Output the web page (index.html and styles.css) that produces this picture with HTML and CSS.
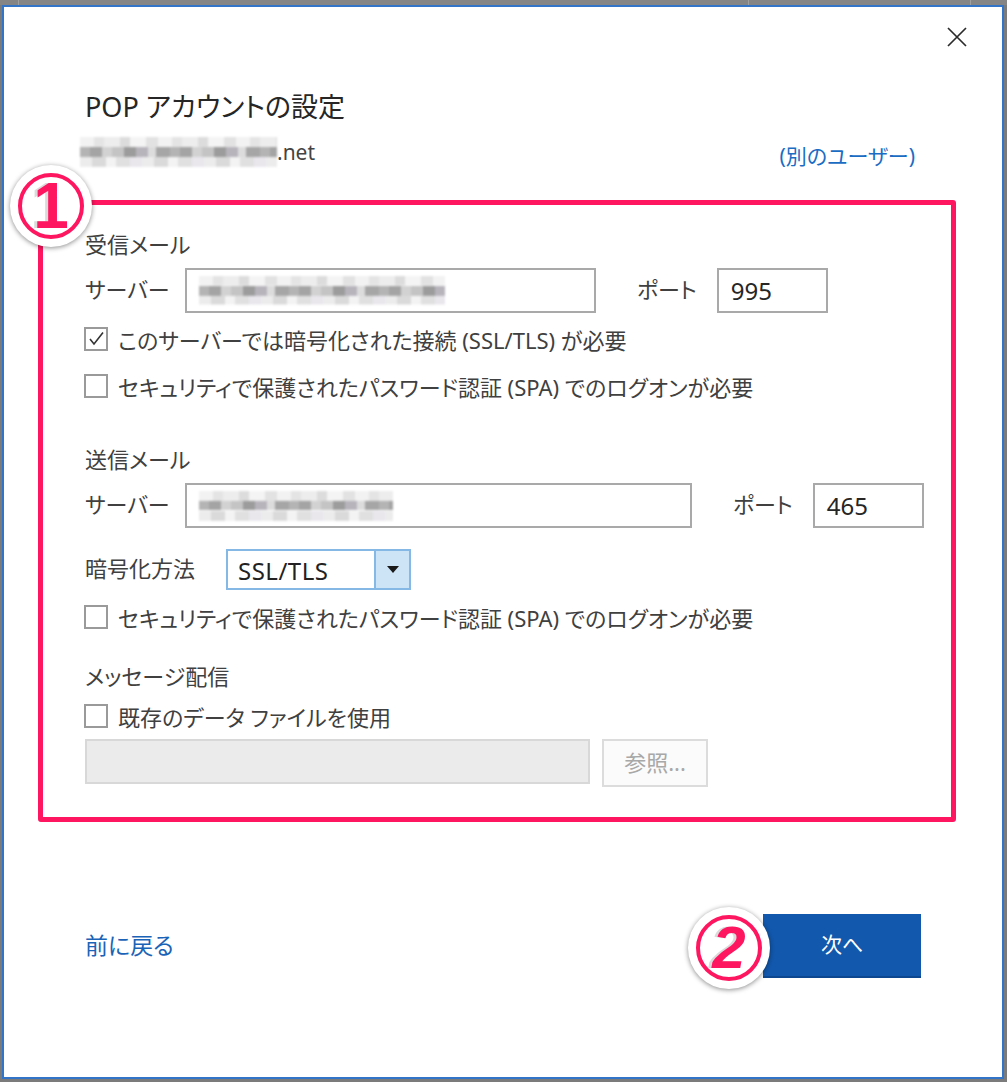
FILE: index.html
```html
<!DOCTYPE html>
<html lang="ja">
<head>
  <meta charset="UTF-8" />
  <meta name="viewport" content="width=device-width, initial-scale=1.0" />
  <title>POP アカウントの設定</title>
  <link rel="stylesheet" href="styles.css">
</head>
<body>

  <!-- 上のバー -->
  <div class="topbar"></div>

  <!-- ダイアログ -->
  <div class="window">

    <div class="titlebar">
      <button class="close" aria-label="閉じる">
        <svg width="22" height="22" viewBox="0 0 22 22">
          <path d="M2 2 L20 20 M20 2 L2 20" stroke="#2b2b2b" stroke-width="1.7" fill="none" />
        </svg>
      </button>
    </div>

    <div class="head">
      <h1>POP アカウントの設定</h1>
      <div class="account">
        <span class="email"><span class="blur blur-mail"></span>.net</span>
        <a class="link other-user" href="#">(別のユーザー)</a>
      </div>
    </div>

    <div class="form">
      <div class="group">受信メール</div>
      <div class="row server">
        <span class="label">サーバー</span>
        <span class="field host host-in"><span class="blur blur-in"></span></span>
        <span class="label port-label">ポート</span>
        <span class="field port">995</span>
      </div>
      <div class="check first">
        <span class="box">
          <svg width="20" height="20" viewBox="0 0 20 20">
            <path d="M4 10 L8 15 L17 3.5" stroke="#333" stroke-width="1.6" fill="none" />
          </svg>
        </span>
        このサーバーでは暗号化された接続 (SSL/TLS) が必要
      </div>
      <div class="check second">
        <span class="box"></span>
        セキュリティで保護されたパスワード認証 (SPA) でのログオンが必要
      </div>

      <div class="group outgoing">送信メール</div>
      <div class="row server">
        <span class="label">サーバー</span>
        <span class="field host host-out"><span class="blur blur-out"></span></span>
        <span class="label port-label">ポート</span>
        <span class="field port">465</span>
      </div>
      <div class="row crypt">
        <span class="label crypt-label">暗号化方法</span>
        <span class="select">
          <span class="select-value">SSL/TLS</span>
          <span class="select-arrow"></span>
        </span>
      </div>
      <div class="check third">
        <span class="box"></span>
        セキュリティで保護されたパスワード認証 (SPA) でのログオンが必要
      </div>

      <div class="group delivery">メッセージ配信</div>
      <div class="check fourth">
        <span class="box"></span>
        既存のデータ ファイルを使用
      </div>
      <div class="row data">
        <span class="field disabled"></span>
        <span class="browse">参照...</span>
      </div>
    </div>

    <div class="footer">
      <a class="link back" href="#">前に戻る</a>
      <button class="next">次へ</button>
    </div>

    <!-- 注釈 -->
    <div class="mark-frame"></div>
    <div class="badge badge-1"><span class="ring">1</span></div>
    <div class="badge badge-2"><span class="ring">2</span></div>
  </div>

</body>
</html>
```

FILE: styles.css
```css
body {
  margin: 0;
  height: 1082px;
  background: #7b7b7b;
  font-family: "Noto Sans", "Noto Sans CJK JP", sans-serif;
  font-feature-settings: "palt";
  color: #404040;
  overflow: hidden;
}

/* 上のバー */
.topbar {
  height: 5px;
  background:
    linear-gradient(90deg, transparent 18px, #a0a0a0 18px, #a0a0a0 19px, transparent 19px,
      transparent 748px, #a0a0a0 748px, #a0a0a0 749px, transparent 749px,
      transparent 970px, #a0a0a0 970px, #a0a0a0 971px, transparent 971px),
    #858585;
}

/* ダイアログ */
.window {
  position: relative;
  box-sizing: border-box;
  width: 1002px;
  height: 1074px;
  margin-left: 2px;
  background: #fff;
  border: 2px solid #3274c8;
  display: flex;
  flex-direction: column;
}

.titlebar {
  display: flex;
  justify-content: flex-end;
  padding: 19px 34px 0 0;
}

.close {
  width: 22px;
  height: 22px;
  padding: 0;
  border: 0;
  background: transparent;
  display: block;
}

.close svg {
  display: block;
}

.head {
  padding: 0 87px 0 81px;
}

h1 {
  margin: 41px 0 0;
  font-size: 27px;
  line-height: 36px;
  font-weight: 400;
  color: #262626;
}

.account {
  margin-top: 12px;
  height: 30px;
  display: flex;
  justify-content: space-between;
  align-items: center;
}

.email {
  display: flex;
  align-items: center;
  margin-left: -5px;
  font-size: 21px;
  color: #444;
}

.link {
  color: #1b6cc3;
  text-decoration: none;
  font-size: 21px;
}

.other-user {
  padding-top: 6px;
}

/* ぼかし */
.blur {
  display: block;
  filter: blur(1.2px);
  background:
    repeating-linear-gradient(90deg, #f2f2f2 0 14px, #e4e4e4 14px 24px, #ededed 24px 40px, #dcdcdc 40px 50px, #f4f4f4 50px 66px, #e2e2e2 66px 78px) top / 100% 33% no-repeat,
    repeating-linear-gradient(90deg, #b4b4b4 0 10px, #a4a4a4 10px 22px, #d2d2d2 22px 32px, #c4c4c4 32px 44px, #9c9c9c 44px 56px, #b8b4bc 56px 68px, #dcdcdc 68px 76px, #a6a6a6 76px 90px) center / 100% 34% no-repeat,
    repeating-linear-gradient(90deg, #ececec 0 12px, #dadada 12px 26px, #f3f3f3 26px 36px, #e0e0e0 36px 50px, #e9e6ec 50px 62px) bottom / 100% 33% no-repeat;
}

.blur-mail {
  width: 197px;
  height: 30px;
}

.blur-in {
  width: 246px;
  height: 29px;
}

.blur-out {
  width: 194px;
  height: 30px;
}

/* フォーム */
.form {
  padding-left: 81px;
  font-size: 22px;
}

.group {
  margin-top: 62px;
  line-height: 30px;
}

.group.outgoing {
  margin-top: 42px;
}

.group.delivery {
  margin-top: 28px;
}

.row {
  display: flex;
  align-items: center;
}

.server {
  margin-top: 9px;
}

.label {
  width: 100px;
  flex: none;
  padding-bottom: 6px;
}

.field {
  box-sizing: border-box;
  height: 45px;
  border: 2px solid #a9a9a9;
  background: #fff;
  display: flex;
  align-items: center;
}

.host {
  padding-left: 12px;
}

.host-in {
  width: 411px;
}

.host-out {
  width: 507px;
}

.port-label {
  width: auto;
  margin: 0 20px 0 41px;
}

.port {
  width: 111px;
  padding-left: 12px;
  color: #262626;
  font-size: 24px;
}

.crypt {
  margin-top: 21px;
}

.crypt-label {
  width: 141px;
}

.select {
  box-sizing: border-box;
  width: 185px;
  height: 41px;
  border: 2px solid #86b8e6;
  display: flex;
}

.select-value {
  flex: 1;
  padding-left: 10px;
  line-height: 39px;
  color: #222;
  font-size: 24px;
  letter-spacing: 0.5px;
}

.select-arrow {
  width: 33px;
  background: #cde4f7;
  border-left: 2px solid #86b8e6;
  display: flex;
  align-items: center;
  justify-content: center;
}

.select-arrow::before {
  content: "";
  border-left: 6px solid transparent;
  border-right: 6px solid transparent;
  border-top: 7px solid #1a1a1a;
}

/* チェックボックス */
.check {
  height: 32px;
  display: flex;
  align-items: center;
  gap: 10px;
  margin-left: -1px;
}

.check.first {
  margin-top: 10px;
}

.check.second {
  margin-top: 15px;
}

.check.third {
  margin-top: 11px;
}

.check.fourth {
  margin-top: 9px;
}

.box {
  box-sizing: border-box;
  width: 24px;
  height: 24px;
  flex: none;
  border: 2px solid #9a9a9a;
  display: flex;
  align-items: center;
  justify-content: center;
}

.data {
  margin-top: 7px;
  align-items: flex-start;
  gap: 12px;
}

.disabled {
  width: 505px;
  background: #ebebeb;
  border-color: #d8d8d8;
}

.browse {
  box-sizing: border-box;
  width: 106px;
  height: 48px;
  border: 2px solid #dcdcdc;
  background: #fbfbfb;
  color: #a8a8a8;
  display: flex;
  align-items: center;
  justify-content: center;
  padding-bottom: 4px;
}

/* 下 */
.footer {
  margin-top: 127px;
  padding: 0 81px;
  display: flex;
  justify-content: space-between;
  align-items: center;
}

.back {
  color: #1a63b7;
  font-size: 23px;
  padding-bottom: 4px;
}

.next {
  width: 158px;
  height: 64px;
  border: 0;
  border-bottom: 2px solid #0d4790;
  background: #1258ad;
  color: #fff;
  font-family: "Noto Sans", "Noto Sans CJK JP", sans-serif;
  font-size: 21px;
  padding-bottom: 6px;
}

/* 注釈 */
.mark-frame {
  position: absolute;
  left: 34px;
  top: 193px;
  width: 918px;
  height: 622px;
  box-sizing: border-box;
  border: 5px solid #ff1660;
  border-radius: 3px;
}

.badge {
  position: absolute;
  width: 82px;
  height: 82px;
  border-radius: 50%;
  background: #fff;
  box-shadow: 0 1px 5px rgba(0, 0, 0, 0.45);
  display: flex;
  align-items: center;
  justify-content: center;
}

.badge-1 {
  left: 6px;
  top: 158px;
}

.badge-2 {
  left: 684px;
  top: 900px;
}

.ring {
  box-sizing: border-box;
  width: 66px;
  height: 66px;
  border-radius: 50%;
  border: 4px solid #ff1660;
  display: flex;
  align-items: center;
  justify-content: center;
  color: #ff1660;
  font-family: "Liberation Sans", sans-serif;
  font-weight: 700;
  font-size: 64px;
  line-height: 1;
  text-shadow: -3px 0 0 rgba(150, 150, 150, 0.35);
}

.badge-2 .ring {
  font-size: 60px;
  font-style: italic;
}
```
